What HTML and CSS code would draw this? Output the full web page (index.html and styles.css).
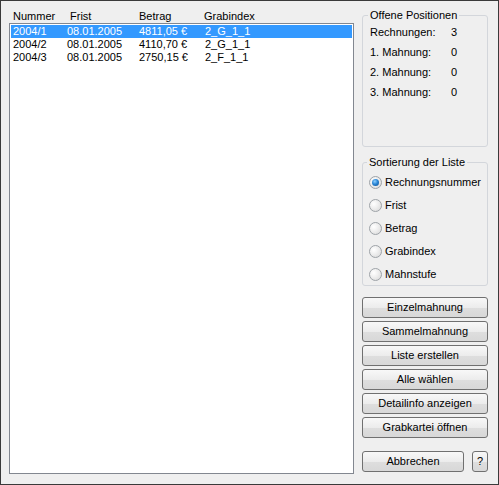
FILE: index.html
```html
<!DOCTYPE html>
<html>
<head>
<meta charset="utf-8">
<link rel="stylesheet" href="styles.css">
</head>
<body>
<div class="window">
  <div class="left">
    <div class="head">
      <span class="c1">Nummer</span><span class="c2 h2">Frist</span><span class="c3">Betrag</span><span class="c4 h4">Grabindex</span>
    </div>
    <div class="list">
      <div class="row sel"><span class="c1">2004/1</span><span class="c2">08.01.2005</span><span class="c3">4811,05 €</span><span class="c4">2_G_1_1</span></div>
      <div class="row"><span class="c1">2004/2</span><span class="c2">08.01.2005</span><span class="c3">4110,70 €</span><span class="c4">2_G_1_1</span></div>
      <div class="row"><span class="c1">2004/3</span><span class="c2">08.01.2005</span><span class="c3">2750,15 €</span><span class="c4">2_F_1_1</span></div>
    </div>
  </div>
  <div class="right">
    <fieldset class="group g1">
      <legend>Offene Positionen</legend>
      <div class="stat"><span class="lbl">Rechnungen:</span><span>3</span></div>
      <div class="stat"><span class="lbl">1. Mahnung:</span><span>0</span></div>
      <div class="stat"><span class="lbl">2. Mahnung:</span><span>0</span></div>
      <div class="stat"><span class="lbl">3. Mahnung:</span><span>0</span></div>
    </fieldset>
    <fieldset class="group g2">
      <legend>Sortierung der Liste</legend>
      <div class="radio"><span class="dot on"></span>Rechnungsnummer</div>
      <div class="radio"><span class="dot"></span>Frist</div>
      <div class="radio"><span class="dot"></span>Betrag</div>
      <div class="radio"><span class="dot"></span>Grabindex</div>
      <div class="radio"><span class="dot"></span>Mahnstufe</div>
    </fieldset>
    <div class="buttons">
      <div class="btn">Einzelmahnung</div>
      <div class="btn">Sammelmahnung</div>
      <div class="btn">Liste erstellen</div>
      <div class="btn">Alle wählen</div>
      <div class="btn">Detailinfo anzeigen</div>
      <div class="btn">Grabkartei öffnen</div>
    </div>
    <div class="bottom">
      <div class="btn cancel">Abbrechen</div>
      <div class="btn help">?</div>
    </div>
  </div>
</div>
</body>
</html>
```
FILE: styles.css
```css
* { box-sizing: border-box; }
html, body { margin: 0; padding: 0; }
body {
  width: 499px;
  height: 485px;
  font-family: "Liberation Sans", Arial, sans-serif;
  font-size: 11px;
  line-height: 13px;
  color: #000;
  background: #efefef;
}
.window {
  width: 499px;
  height: 485px;
  border: 1px solid #3a3a3a;
  background: #efefef;
  display: flex;
  gap: 8px;
  padding: 0 10px 0 8px;
}
.left {
  width: 345px;
  display: flex;
  flex-direction: column;
  padding-bottom: 10px;
}
.head {
  display: flex;
  padding: 9px 0 0 4px;
  height: 22px;
}
.c1 { width: 54px; flex: none; }
.c2 { width: 72px; flex: none; }
.c3 { width: 66px; flex: none; }
.c4 { flex: 1; }
.h2 { padding-left: 3px; }
.h4 { margin-left: -1px; }
.list {
  flex: 1;
  background: #fff;
  border: 1px solid #828790;
  padding: 1px 1px;
}
.row {
  display: flex;
  height: 13px;
  padding-left: 2px;
  white-space: nowrap;
}
.row.sel { background: #3399ff; color: #fff; }
.right {
  width: 126px;
  display: flex;
  flex-direction: column;
}
.group {
  margin: 0;
  border: 1px solid #d3d6db;
  border-radius: 3px;
  padding: 0 0 0 7px;
}
.group legend {
  padding: 0 2px;
  margin-left: -2px;
  line-height: 13px;
}
.g1 { margin-top: 8px; height: 138px; padding-top: 0; }
.stat { display: flex; height: 20px; line-height: 20px; }
.stat .lbl { width: 81px; }
.g2 { margin-top: 9px; height: 130px; padding-top: 2px; padding-left: 6px; }
.radio {
  display: flex;
  align-items: center;
  height: 23px;
  gap: 3px;
}
.dot {
  width: 13px;
  height: 13px;
  border-radius: 50%;
  border: 1px solid #9ea3a8;
  background: radial-gradient(circle at 35% 35%, #ffffff 0%, #f0f0f0 40%, #d6d6d6 100%);
  position: relative;
  flex: none;
}
.dot.on::after {
  content: "";
  position: absolute;
  left: 2px;
  top: 2px;
  width: 7px;
  height: 7px;
  border-radius: 50%;
  background: radial-gradient(circle at 40% 35%, #8fd0ff 0%, #2a86d6 45%, #0b4a8a 100%);
}
.buttons {
  margin-top: 11px;
  display: flex;
  flex-direction: column;
  gap: 3px;
}
.btn {
  height: 21px;
  border: 1px solid #707070;
  border-radius: 3px;
  background: linear-gradient(#f8f8f8 0%, #ececec 50%, #dedede 51%, #d8d8d8 100%);
  display: flex;
  align-items: center;
  justify-content: center;
}
.bottom {
  margin-top: 13px;
  display: flex;
  gap: 8px;
}
.cancel { width: 102px; }
.help { width: 16px; }
```
